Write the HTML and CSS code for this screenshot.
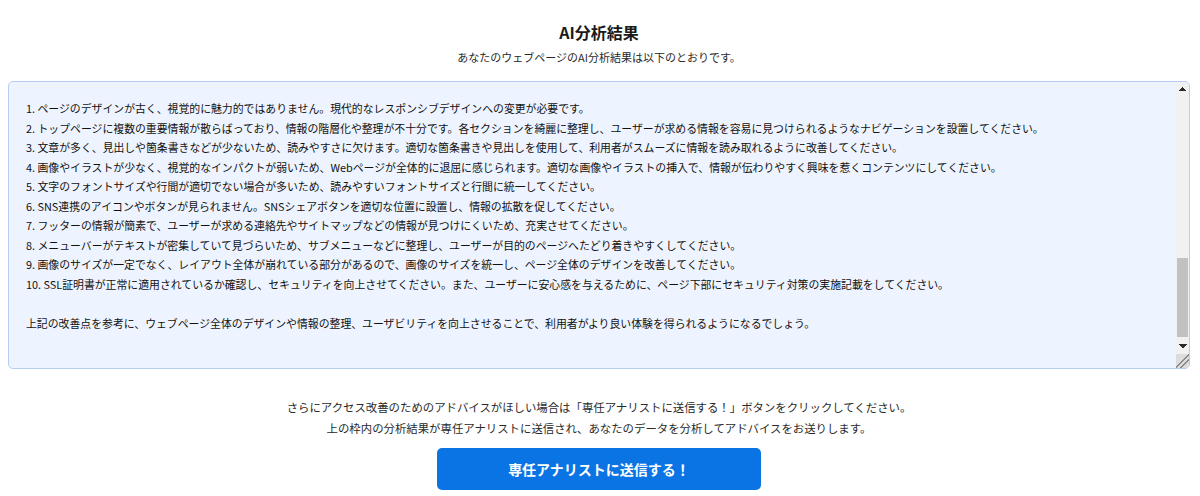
FILE: index.html
```html
<!DOCTYPE html>
<html lang="ja">
<head>
<meta charset="utf-8">
<title>AI分析結果</title>
<link rel="stylesheet" href="styles.css">
</head>
<body>
<main class="page">
  <h1 class="title">AI分析結果</h1>
  <p class="subtitle">あなたのウェブページのAI分析結果は以下のとおりです。</p>
  <div class="result-frame">
  <textarea class="result-box" id="result" readonly>
































1. ページのデザインが古く、視覚的に魅力的ではありません。現代的なレスポンシブデザインへの変更が必要です。
2. トップページに複数の重要情報が散らばっており、情報の階層化や整理が不十分です。各セクションを綺麗に整理し、ユーザーが求める情報を容易に見つけられるようなナビゲーションを設置してください。
3. 文章が多く、見出しや箇条書きなどが少ないため、読みやすさに欠けます。適切な箇条書きや見出しを使用して、利用者がスムーズに情報を読み取れるように改善してください。
4. 画像やイラストが少なく、視覚的なインパクトが弱いため、Webページが全体的に退屈に感じられます。適切な画像やイラストの挿入で、情報が伝わりやすく興味を惹くコンテンツにしてください。
5. 文字のフォントサイズや行間が適切でない場合が多いため、読みやすいフォントサイズと行間に統一してください。
6. SNS連携のアイコンやボタンが見られません。SNSシェアボタンを適切な位置に設置し、情報の拡散を促してください。
7. フッターの情報が簡素で、ユーザーが求める連絡先やサイトマップなどの情報が見つけにくいため、充実させてください。
8. メニューバーがテキストが密集していて見づらいため、サブメニューなどに整理し、ユーザーが目的のページへたどり着きやすくしてください。
9. 画像のサイズが一定でなく、レイアウト全体が崩れている部分があるので、画像のサイズを統一し、ページ全体のデザインを改善してください。
10. SSL証明書が正常に適用されているか確認し、セキュリティを向上させてください。また、ユーザーに安心感を与えるために、ページ下部にセキュリティ対策の実施記載をしてください。

上記の改善点を参考に、ウェブページ全体のデザインや情報の整理、ユーザビリティを向上させることで、利用者がより良い体験を得られるようになるでしょう。

</textarea>
    <div class="scrollbar" aria-hidden="true">
      <div class="sb-btn sb-up"></div>
      <div class="sb-track"><div class="sb-thumb"></div></div>
      <div class="sb-btn sb-down"></div>
      <div class="sb-corner"></div>
    </div>
  </div>
  <div class="note">
    <p>さらにアクセス改善のためのアドバイスがほしい場合は「専任アナリストに送信する！」ボタンをクリックしてください。</p>
    <p>上の枠内の分析結果が専任アナリストに送信され、あなたのデータを分析してアドバイスをお送りします。</p>
  </div>
  <div class="actions">
    <button class="send-btn" type="button">専任アナリストに送信する！</button>
  </div>
</main>
<script src="script.js"></script>
</body>
</html>
```

FILE: styles.css
```css
* { box-sizing: border-box; }

body {
  margin: 0;
  background: #ffffff;
  font-family: "Noto Sans CJK JP", "Noto Sans", sans-serif;
  color: #222222;
}

.page {
  padding: 0 10px 0 8px;
  display: flex;
  flex-direction: column;
}

.title {
  margin: 20px 0 0;
  font-size: 16px;
  line-height: 24px;
  font-weight: 700;
  text-align: center;
  color: #1a1a1a;
}

.subtitle {
  margin: 4px 0 0;
  font-size: 11px;
  line-height: 18px;
  text-align: center;
  color: #2a2a2a;
}

.result-frame {
  margin: 15px 0 0;
  height: 288px;
  display: flex;
  border: 1px solid #b5cdf0;
  border-radius: 5px;
  background: #eef4ff;
  overflow: hidden;
}

.result-box {
  flex: 1;
  min-width: 0;
  display: block;
  margin: 0;
  height: 100%;
  padding: 10px 16px 11px 17px;
  border: none;
  background: transparent;
  font-family: "Noto Sans CJK JP", "Noto Sans", sans-serif;
  font-size: 10.86px;
  line-height: 19.5px;
  color: #111111;
  white-space: pre;
  overflow: hidden;
  scrollbar-width: none;
  resize: none;
  outline: none;
}

.scrollbar {
  width: 13px;
  display: flex;
  flex-direction: column;
  background: #f1f1f1;
}

.sb-btn {
  height: 15px;
  flex: none;
  background-repeat: no-repeat;
  background-size: 4px 4px;
}

.sb-up {
  background-image:
    linear-gradient(to bottom right, transparent 50%, #2b2b2b 50%),
    linear-gradient(to bottom left, transparent 50%, #2b2b2b 50%);
  background-position: 2.5px 5px, 6.5px 5px;
}

.sb-down {
  background-image:
    linear-gradient(to top right, transparent 50%, #2b2b2b 50%),
    linear-gradient(to top left, transparent 50%, #2b2b2b 50%);
  background-position: 2.5px 5px, 6.5px 5px;
}

.sb-track {
  flex: 1;
  padding-top: 161px;
}

.sb-thumb {
  height: 79px;
  margin: 0 1px 0 1px;
  background: #c1c1c1;
}

.sb-corner {
  height: 14px;
  flex: none;
  background-color: #dcdcdc;
  background-image:
    linear-gradient(135deg, transparent 9px, #8a8a8a 9px, #8a8a8a 10px, transparent 10px, transparent 12.5px, #8a8a8a 12.5px, #8a8a8a 13.5px, transparent 13.5px);
}

.note {
  margin-top: 28px;
  display: flex;
  flex-direction: column;
  align-items: center;
}

.note p {
  margin: 0;
  font-size: 11.4px;
  line-height: 21px;
  color: #2a2a2a;
}

.actions {
  margin-top: 8px;
  display: flex;
  justify-content: center;
}

.send-btn {
  width: 324px;
  height: 42px;
  margin-top: 1px;
  border: none;
  border-radius: 5px;
  background: #0b74e5;
  color: #ffffff;
  font-family: "Noto Sans CJK JP", "Noto Sans", sans-serif;
  font-size: 14px;
  font-weight: 700;
  cursor: pointer;
}
```

FILE: script.js
```js
var box = document.getElementById('result');
box.scrollTop = box.scrollHeight - box.clientHeight - 15;
```
